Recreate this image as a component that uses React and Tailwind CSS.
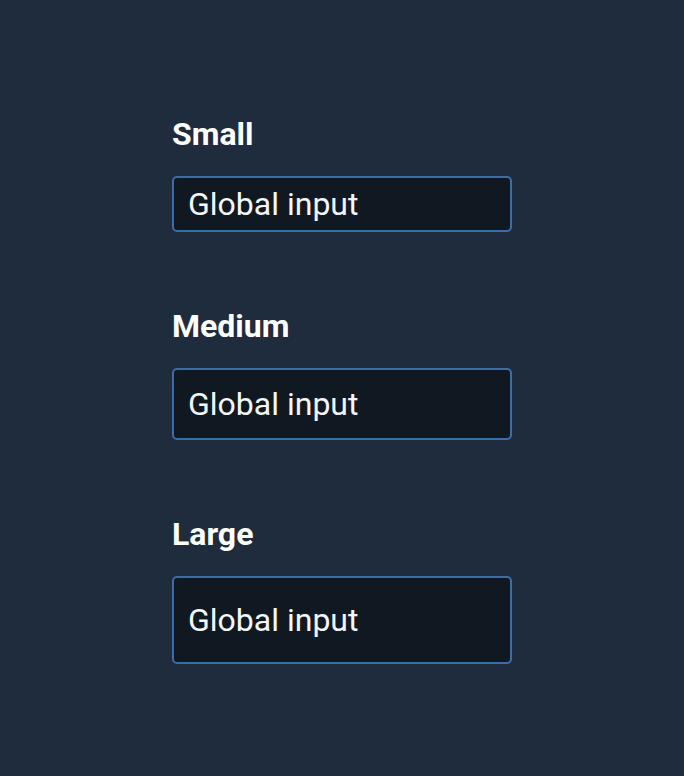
import React from "react";

const sizes = [
  { label: "Small", height: "h-[56px]" },
  { label: "Medium", height: "h-[72px]" },
  { label: "Large", height: "h-[88px]" },
];

export default function App() {
  return (
    <div className="min-h-screen bg-[#1e2c3d] pt-[118px] pl-[172px] font-['Roboto',sans-serif]">
      <div className="flex w-[340px] flex-col gap-[78px]">
        {sizes.map(s => (
          <div key={s.label} className="flex flex-col">
            <label className="mb-[26px] text-[32px] font-bold leading-[32px] text-white">{s.label}</label>
            <input
              type="text"
              readOnly
              value="Global input"
              className={`w-full ${s.height} rounded-[5px] border-2 border-[#3a6ea5] bg-[#101922] px-[14px] text-[32px] text-[#f4f6f8] outline-none`}
            />
          </div>
        ))}
      </div>
    </div>
  );
}
